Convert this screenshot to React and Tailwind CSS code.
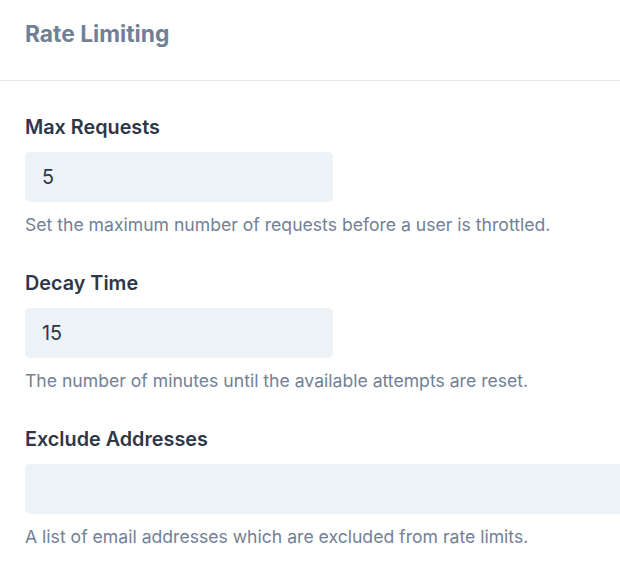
const fields = [
  {
    label: "Max Requests",
    value: "5",
    help: "Set the maximum number of requests before a user is throttled.",
    wide: false,
  },
  {
    label: "Decay Time",
    value: "15",
    help: "The number of minutes until the available attempts are reset.",
    wide: false,
  },
  {
    label: "Exclude Addresses",
    value: "",
    help: "A list of email addresses which are excluded from rate limits.",
    wide: true,
  },
];

export default function App() {
  return (
    <div
      className="w-[620px] h-[572px] overflow-hidden bg-white"
      style={{ fontFamily: "Inter, 'Noto Sans', sans-serif" }}
    >
      {/* header */}
      <div className="h-[81px] border-b border-[#e2e8f0] px-[25px] pt-[19px]">
        <h2 className="text-[22.8px] leading-[30px] font-bold text-[#718096]">
          Rate Limiting
        </h2>
      </div>

      <div className="px-[25px] pt-[33px] flex flex-col gap-[32px]">
        {fields.map((f) => (
          <div key={f.label} className="flex flex-col">
            <label className="text-[19.8px] leading-[27px] font-semibold text-[#2d3748]">
              {f.label}
            </label>
            <div
              className={`mt-[11px] h-[50px] shrink-0 rounded-[5px] bg-[#edf2f7] px-[17px] pt-[1px] flex items-center text-[19.8px] text-[#2d3748] ${
                f.wide ? "w-[640px]" : "w-[308px]"
              }`}
            >
              {f.value}
            </div>
            <p className="mt-[10px] text-[17.6px] leading-[26px] text-[#718096]">
              {f.help}
            </p>
          </div>
        ))}
      </div>
    </div>
  );
}
